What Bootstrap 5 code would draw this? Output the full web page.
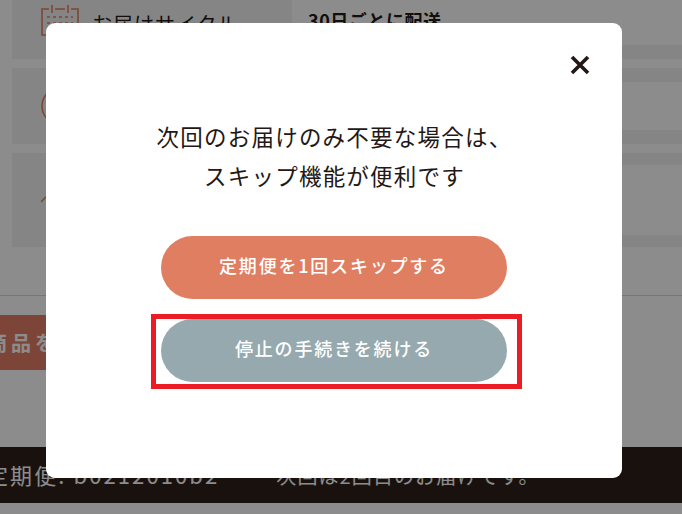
<!DOCTYPE html>
<html lang="ja">
<head>
<meta charset="utf-8">
<title>定期便</title>
<link href="https://cdn.jsdelivr.net/npm/bootstrap@5.3.0/dist/css/bootstrap.min.css" rel="stylesheet">
<style>
html, body { height: 100%; }
body { width: 682px; height: 514px; overflow: hidden; background: #fff; font-family: "Noto Sans CJK JP", "Noto Sans", sans-serif; color: #231815; position: relative; }
.page-under { height: 514px; overflow: hidden; }
.spec-list { padding: 0 0 0 12px; margin-top: -1px; }
.spec-row { background: #f3f3f3; margin-bottom: 9px; }
.spec-row.r1 { height: 60px; }
.spec-row.r2 { height: 76px; }
.spec-row.r3 { height: 94px; }
.spec-label { width: 280px; flex: none; padding-left: 29px; }
.spec-label svg { flex: none; }
.label-text { font-size: 20px; line-height: 28px; margin-left: 13px; margin-top: 5px; letter-spacing: .05em; }
.spec-value { flex: 1; background: #fff; font-weight: 700; font-size: 18px; letter-spacing: .03em; padding-left: 16px; }
.r1 .spec-value { margin-bottom: 14px; line-height: 40px; padding-top: 1px; }
.r2 .spec-value { margin: 14px 0; }
.r3 .spec-value { margin: 12px 0; }
.r1 .spec-label { padding-top: 6px; }
.r2 .spec-label { padding-top: 19px; }
.r3 .spec-label { padding-top: 42px; }
.divider-line { border-top: 1px solid #d8d8d8; margin: 48px 0 0; }
.cta-under { background: #e47f64; color: #fff; width: 300px; height: 55px; margin: 19px 0 0 -30px; font-size: 20px; font-weight: 700; letter-spacing: .2em; padding-left: 17px; line-height: 55px; }
.dark-bar { background: #2e2018; color: #fff; height: 56px; margin-top: 77px; font-size: 22px; line-height: 55px; white-space: nowrap; letter-spacing: .095em; margin-left: -14px; }
.dark-bar span + span { margin-left: 57px; font-size: 20px; letter-spacing: 1.1px; }
.dim-layer { position: absolute; inset: 0; background: rgba(0, 0, 0, .45); }
.skip-dialog { position: absolute; left: 46px; top: 23px; width: 576px; height: 455px; background: #fff; border-radius: 9px; padding: 94px 0 0; text-align: center; }
.x-btn { position: absolute; top: 32px; right: 32px; width: 20px; height: 20px; padding: 0; border: 0; background: none; line-height: 0; }
.skip-msg { font-size: 22.5px; line-height: 39px; letter-spacing: .055em; color: #231815; margin: 0 0 41px; padding-left: 1px; }
.pill-btn { display: block; width: 346px; height: 63px; margin: 0 auto; line-height: 59px; padding: 0; border: 0; color: #fff; font-size: 18px; font-weight: 500; letter-spacing: .1em; border-radius: 32px; }
.pill-btn:hover, .pill-btn:focus { color: #fff; }
.pill-orange, .pill-orange:hover { background: #e07e62; }
.pill-slate, .pill-slate:hover { background: #95a9af; margin-top: 20px; }
.red-mark { position: absolute; left: 105px; top: 291px; width: 371px; height: 75px; border: 5px solid #ec1c24; pointer-events: none; }
</style>
</head>
<body>
<div class="page-under">
  <div class="spec-list">
    <div class="spec-row r1 d-flex">
      <div class="spec-label d-flex align-items-start">
        <svg width="38" height="31" viewBox="0 0 38 31" fill="none" stroke="#e47f64" stroke-width="1.6"><path d="M8 4H1v26h36V4h-7M14 4h10M11 0v8M27 0v8"/><path d="M6 12h26M6 18h26" stroke-dasharray="3 3"/></svg>
        <div class="label-text">お届けサイクル</div>
      </div>
      <div class="spec-value">30日ごとに配送</div>
    </div>
    <div class="spec-row r2 d-flex">
      <div class="spec-label d-flex align-items-start">
        <svg width="38" height="38" viewBox="0 0 38 38" fill="none" stroke="#e47f64" stroke-width="1.6"><circle cx="19" cy="19" r="18"/></svg>
      </div>
      <div class="spec-value"></div>
    </div>
    <div class="spec-row r3 d-flex">
      <div class="spec-label d-flex align-items-start">
        <svg width="38" height="30" viewBox="0 0 38 30" fill="none" stroke="#e47f64" stroke-width="1.6"><path d="M0 7 6 1"/></svg>
      </div>
      <div class="spec-value"></div>
    </div>
  </div>
  <div class="divider-line"></div>
  <div class="cta-under">商品を</div>
  <div class="dark-bar"><span>定期便: b0212010b2</span><span>次回は2回目のお届けです。</span></div>
</div>
<div class="dim-layer"></div>
<div class="skip-dialog" role="dialog">
  <button type="button" class="x-btn" aria-label="閉じる">
    <svg width="20" height="20" viewBox="0 0 20 20"><path d="M2 2l16 16M18 2 2 18" stroke="#231815" stroke-width="3.6" fill="none"/></svg>
  </button>
  <p class="skip-msg">次回のお届けのみ不要な場合は、<br>スキップ機能が便利です</p>
  <a href="#" class="btn pill-btn pill-orange">定期便を1回スキップする</a>
  <a href="#" class="btn pill-btn pill-slate">停止の手続きを続ける</a>
  <div class="red-mark"></div>
</div>
<script src="https://cdn.jsdelivr.net/npm/bootstrap@5.3.0/dist/js/bootstrap.bundle.min.js"></script>
</body>
</html>
